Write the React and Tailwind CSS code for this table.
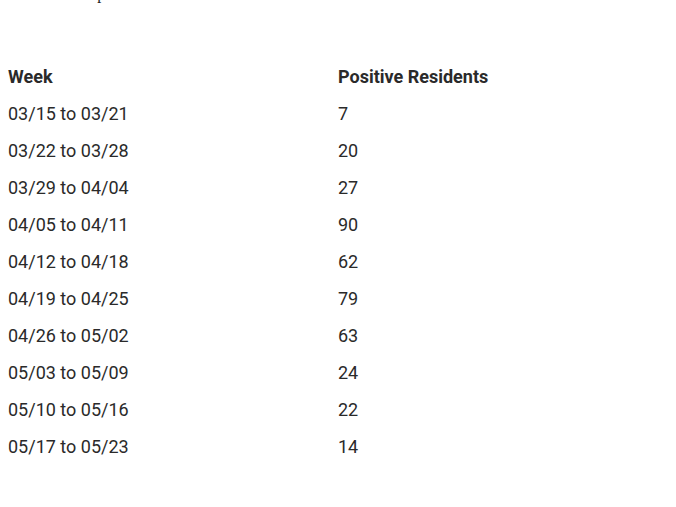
import React from 'react';

const rows = [
  ['03/15 to 03/21', 7],
  ['03/22 to 03/28', 20],
  ['03/29 to 04/04', 27],
  ['04/05 to 04/11', 90],
  ['04/12 to 04/18', 62],
  ['04/19 to 04/25', 79],
  ['04/26 to 05/02', 63],
  ['05/03 to 05/09', 24],
  ['05/10 to 05/16', 22],
  ['05/17 to 05/23', 14],
];

export default function App() {
  return (
    <div className="bg-white min-h-[507px] overflow-hidden">
      <p className="-mt-4 pl-3 text-[16px] leading-5 text-[#222] font-['Liberation_Serif',serif]">
        Data are compiled.
      </p>
      <table className="mt-[54px] w-full table-fixed border-collapse text-[18px] text-[#2a2a2a] font-['Roboto',sans-serif]">
        <thead>
          <tr className="h-[37px]">
            <th className="w-[330px] px-2 text-left font-bold">Week</th>
            <th className="px-2 text-left font-bold">Positive Residents</th>
          </tr>
        </thead>
        <tbody>
          {rows.map(([week, n]) => (
            <tr key={week} className="h-[37px]">
              <td className="px-2">{week}</td>
              <td className="px-2">{n}</td>
            </tr>
          ))}
        </tbody>
      </table>
    </div>
  );
}
